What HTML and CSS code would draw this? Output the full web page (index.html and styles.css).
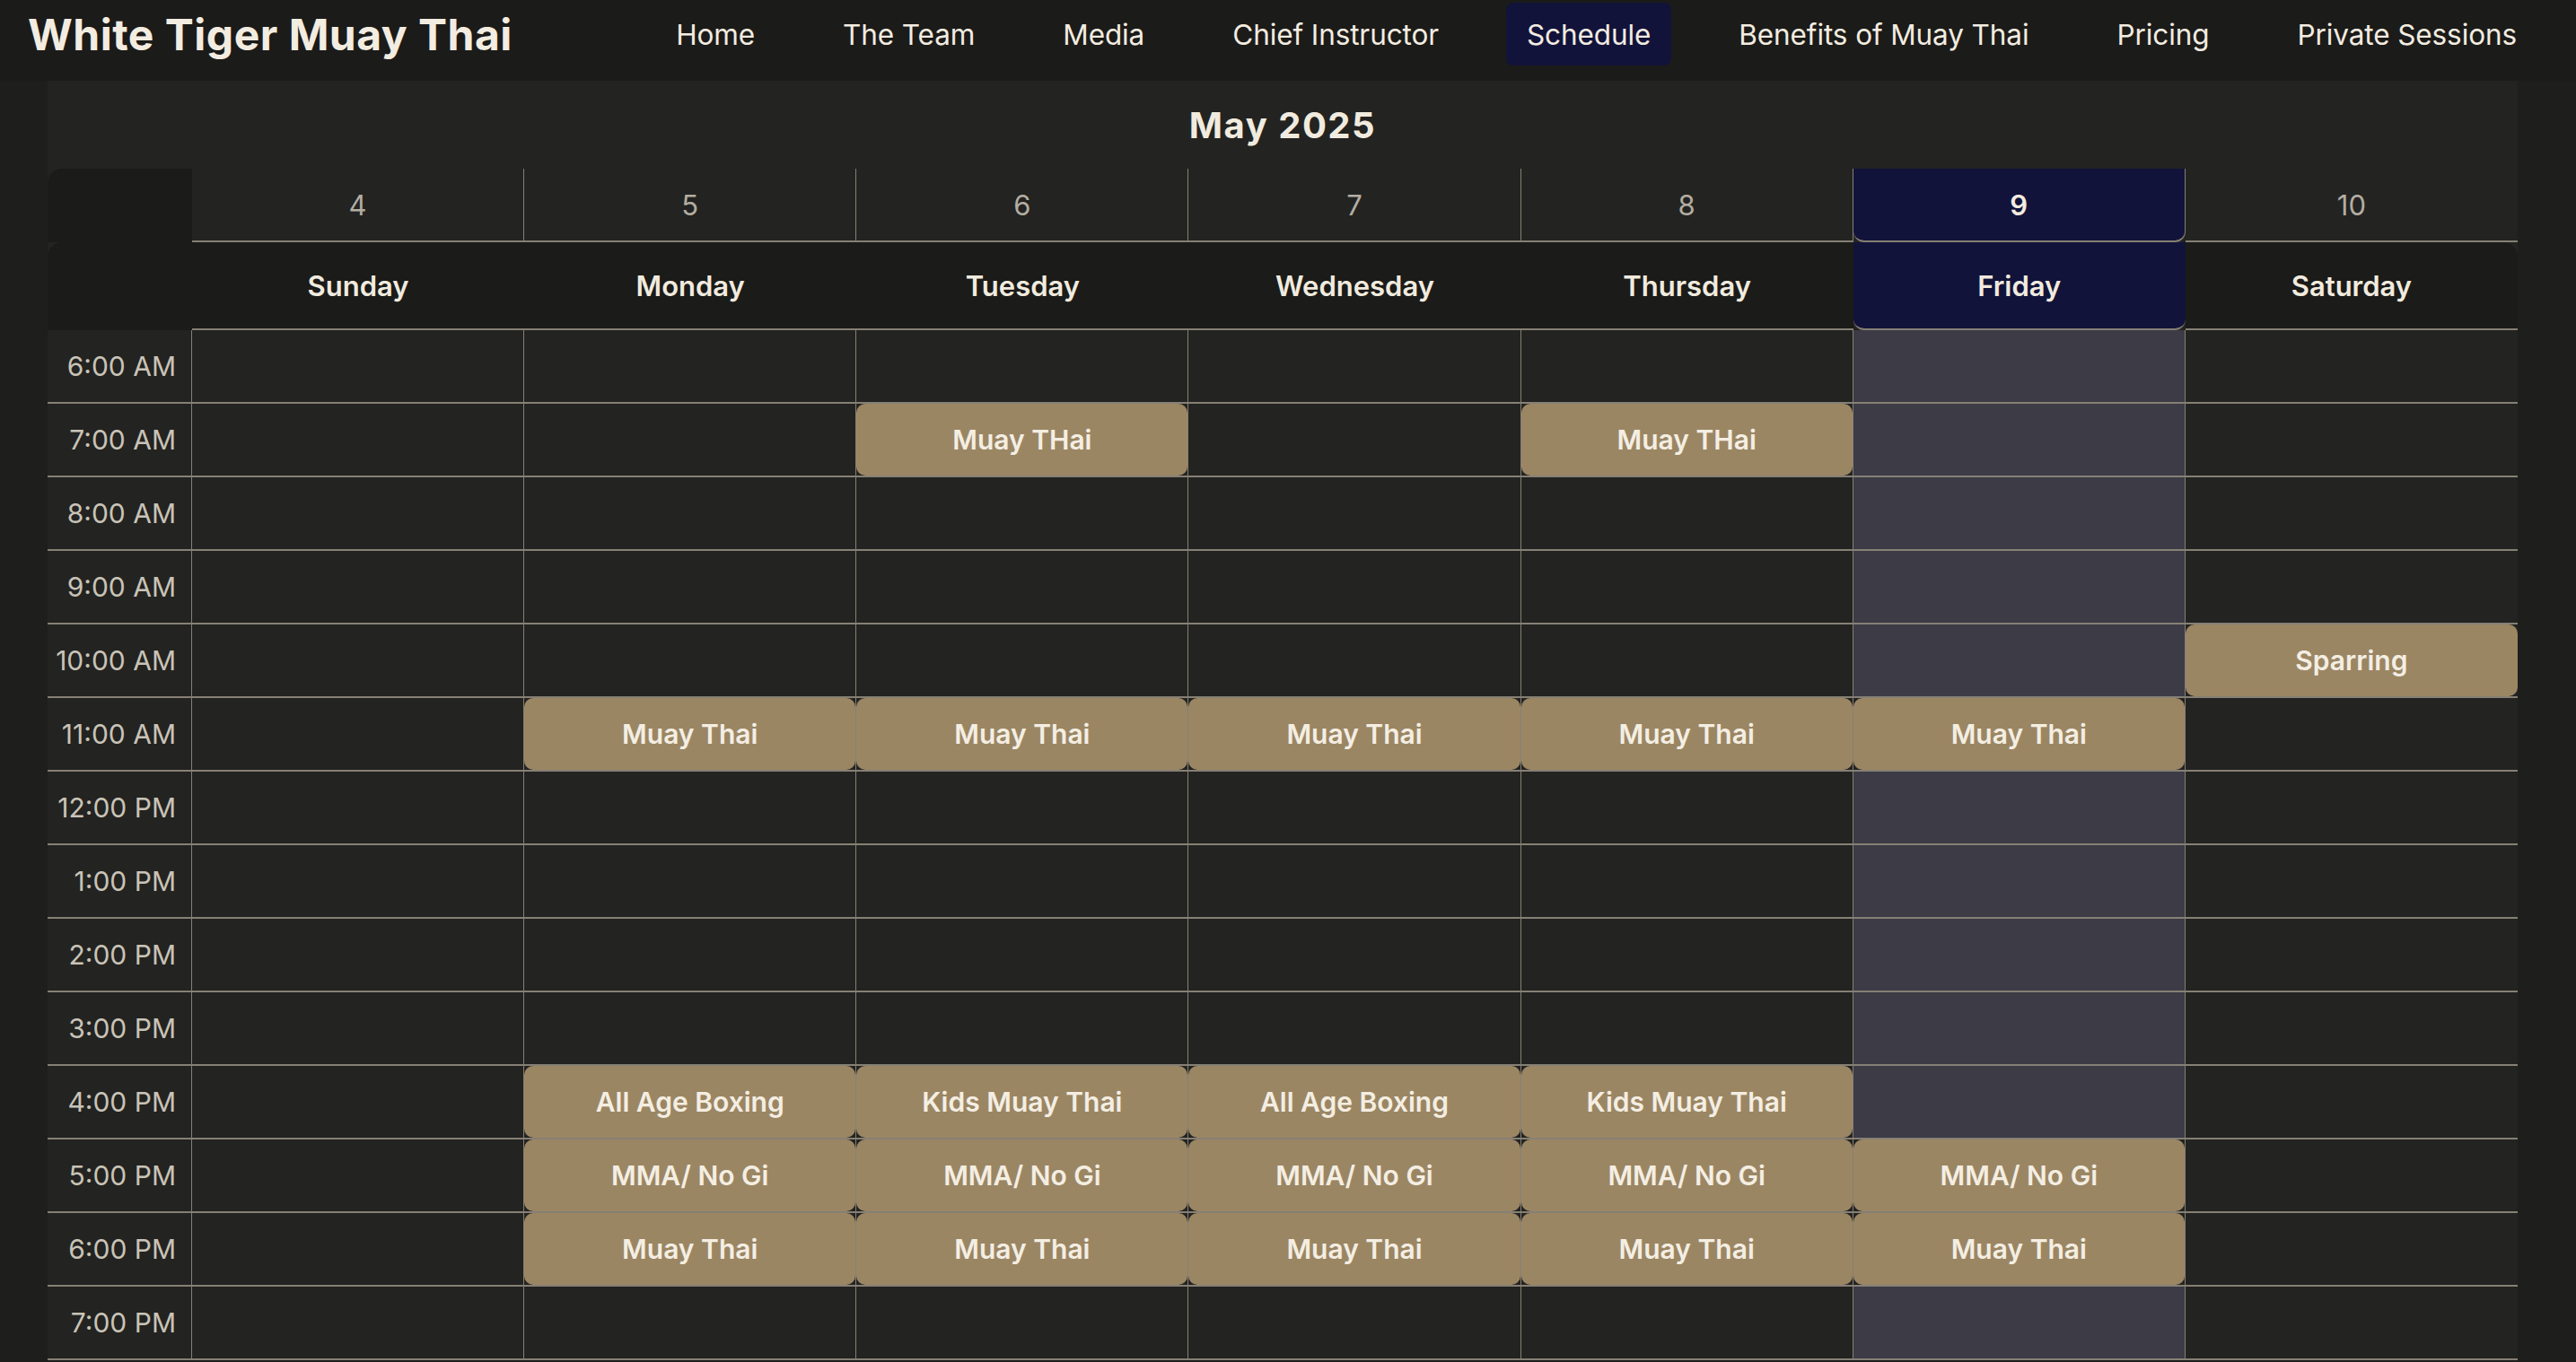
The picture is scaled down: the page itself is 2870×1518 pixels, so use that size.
FILE: index.html
```html
<!DOCTYPE html>
<html lang="en">
<head>
<meta charset="utf-8">
<title>Schedule - White Tiger Muay Thai</title>
<link rel="stylesheet" href="styles.css">
</head>
<body>
<header class="topbar">
  <div class="brand">White Tiger Muay Thai</div>
  <nav class="links">
    <a class="link" href="#">Home</a>
    <a class="link" href="#">The Team</a>
    <a class="link" href="#">Media</a>
    <a class="link" href="#">Chief Instructor</a>
    <a class="link active" href="#">Schedule</a>
    <a class="link" href="#">Benefits of Muay Thai</a>
    <a class="link" href="#">Pricing</a>
    <a class="link" href="#">Private Sessions</a>
  </nav>
</header>
<main class="page">
  <section class="calendar">
    <h2 class="month">May 2025</h2>
    <div class="grid">
      <div class="corner"></div>
      <div class="date">4</div>
      <div class="date">5</div>
      <div class="date">6</div>
      <div class="date">7</div>
      <div class="date">8</div>
      <div class="date today">9</div>
      <div class="date last">10</div>

      <div class="corner"></div>
      <div class="dayname">Sunday</div>
      <div class="dayname">Monday</div>
      <div class="dayname">Tuesday</div>
      <div class="dayname">Wednesday</div>
      <div class="dayname">Thursday</div>
      <div class="dayname today">Friday</div>
      <div class="dayname last">Saturday</div>

      <div class="time">6:00 AM</div>
      <div class="cell"></div><div class="cell"></div><div class="cell"></div><div class="cell"></div><div class="cell"></div><div class="cell today"></div><div class="cell last"></div>

      <div class="time">7:00 AM</div>
      <div class="cell"></div><div class="cell"></div><div class="cell"><div class="event">Muay THai</div></div><div class="cell"></div><div class="cell"><div class="event">Muay THai</div></div><div class="cell today"></div><div class="cell last"></div>

      <div class="time">8:00 AM</div>
      <div class="cell"></div><div class="cell"></div><div class="cell"></div><div class="cell"></div><div class="cell"></div><div class="cell today"></div><div class="cell last"></div>

      <div class="time">9:00 AM</div>
      <div class="cell"></div><div class="cell"></div><div class="cell"></div><div class="cell"></div><div class="cell"></div><div class="cell today"></div><div class="cell last"></div>

      <div class="time">10:00 AM</div>
      <div class="cell"></div><div class="cell"></div><div class="cell"></div><div class="cell"></div><div class="cell"></div><div class="cell today"></div><div class="cell last"><div class="event">Sparring</div></div>

      <div class="time">11:00 AM</div>
      <div class="cell"></div><div class="cell"><div class="event">Muay Thai</div></div><div class="cell"><div class="event">Muay Thai</div></div><div class="cell"><div class="event">Muay Thai</div></div><div class="cell"><div class="event">Muay Thai</div></div><div class="cell today busy"><div class="event">Muay Thai</div></div><div class="cell last"></div>

      <div class="time">12:00 PM</div>
      <div class="cell"></div><div class="cell"></div><div class="cell"></div><div class="cell"></div><div class="cell"></div><div class="cell today"></div><div class="cell last"></div>

      <div class="time">1:00 PM</div>
      <div class="cell"></div><div class="cell"></div><div class="cell"></div><div class="cell"></div><div class="cell"></div><div class="cell today"></div><div class="cell last"></div>

      <div class="time">2:00 PM</div>
      <div class="cell"></div><div class="cell"></div><div class="cell"></div><div class="cell"></div><div class="cell"></div><div class="cell today"></div><div class="cell last"></div>

      <div class="time">3:00 PM</div>
      <div class="cell"></div><div class="cell"></div><div class="cell"></div><div class="cell"></div><div class="cell"></div><div class="cell today"></div><div class="cell last"></div>

      <div class="time">4:00 PM</div>
      <div class="cell"></div><div class="cell"><div class="event">All Age Boxing</div></div><div class="cell"><div class="event">Kids Muay Thai</div></div><div class="cell"><div class="event">All Age Boxing</div></div><div class="cell"><div class="event">Kids Muay Thai</div></div><div class="cell today"></div><div class="cell last"></div>

      <div class="time">5:00 PM</div>
      <div class="cell"></div><div class="cell"><div class="event">MMA/ No Gi</div></div><div class="cell"><div class="event">MMA/ No Gi</div></div><div class="cell"><div class="event">MMA/ No Gi</div></div><div class="cell"><div class="event">MMA/ No Gi</div></div><div class="cell today busy"><div class="event">MMA/ No Gi</div></div><div class="cell last"></div>

      <div class="time">6:00 PM</div>
      <div class="cell"></div><div class="cell"><div class="event">Muay Thai</div></div><div class="cell"><div class="event">Muay Thai</div></div><div class="cell"><div class="event">Muay Thai</div></div><div class="cell"><div class="event">Muay Thai</div></div><div class="cell today busy"><div class="event">Muay Thai</div></div><div class="cell last"></div>

      <div class="time">7:00 PM</div>
      <div class="cell"></div><div class="cell"></div><div class="cell"></div><div class="cell"></div><div class="cell"></div><div class="cell today"></div><div class="cell last"></div>
    </div>
  </section>
</main>
</body>
</html>
```
FILE: styles.css
```css
html, body {
  margin: 0;
  padding: 0;
  overflow: hidden;
}
body {
  background: #1e1e1c;
  font-family: Inter, "Noto Sans", sans-serif;
  color: #f1ebdf;
}
.topbar {
  height: 90px;
  box-sizing: border-box;
  background: #1b1b19;
  display: flex;
  align-items: flex-start;
  justify-content: space-between;
  padding: 3px 43px 0 31px;
}
.brand {
  height: 70px;
  display: flex;
  align-items: center;
  font-size: 48px;
  font-weight: 700;
  letter-spacing: 0.5px;
  color: #f3ece0;
}
.links {
  display: flex;
  gap: 52px;
}
.link {
  height: 70px;
  box-sizing: border-box;
  display: flex;
  align-items: center;
  padding: 0 23px;
  border-radius: 8px;
  font-size: 31.5px;
  color: #f3ece0;
  text-decoration: none;
  letter-spacing: -0.1px;
}
.link.active {
  background: #12133a;
}
.page {
  padding-left: 53px;
}
.calendar {
  width: 2752px;
  background: #232321;
}
.month {
  margin: 0;
  height: 98px;
  display: flex;
  align-items: center;
  justify-content: center;
  font-size: 40px;
  font-weight: 700;
  letter-spacing: 1.5px;
  color: #f1ebdf;
}
.grid {
  display: grid;
  grid-template-columns: 161px repeat(7, 1fr);
  grid-template-rows: 82px 98px repeat(14, 82px);
}
.grid > div {
  box-sizing: border-box;
}
.corner {
  background: #1b1b19;
  border-top-left-radius: 16px;
}
.date {
  display: flex;
  align-items: center;
  justify-content: center;
  font-size: 31px;
  color: #b3ada2;
  border-right: 1px solid #868075;
  border-bottom: 2px solid #868075;
}
.date.last {
  border-right: none;
  border-top-right-radius: 16px;
}
.date.today {
  background: #12133a;
  color: #f3ece0;
  font-weight: 600;
  border-radius: 0 0 12px 12px;
}
.dayname {
  display: flex;
  align-items: center;
  justify-content: center;
  font-size: 31px;
  font-weight: 600;
  color: #f1ebdf;
  background: #1b1b19;
  border-bottom: 2px solid #868075;
}
.dayname.last {
  border-top-right-radius: 16px;
}
.dayname.today {
  background: #12133a;
  border-radius: 0 0 12px 12px;
}
.time {
  display: flex;
  align-items: center;
  justify-content: flex-end;
  padding-right: 17px;
  font-size: 30px;
  color: #c9c3b7;
  border-right: 1px solid #868075;
  border-bottom: 2px solid #868075;
}
.cell {
  border-right: 1px solid #868075;
  border-bottom: 2px solid #868075;
  background: #232321;
  display: flex;
}
.cell.today {
  background: #3c3b46;
}
.cell.today.busy {
  background: #232321;
}
.cell.last {
  border-right: none;
}
.event {
  flex: 1;
  display: flex;
  align-items: center;
  justify-content: center;
  background: #9b8664;
  border-radius: 10px;
  font-size: 30px;
  font-weight: 600;
  color: #f4eee2;
}
```
